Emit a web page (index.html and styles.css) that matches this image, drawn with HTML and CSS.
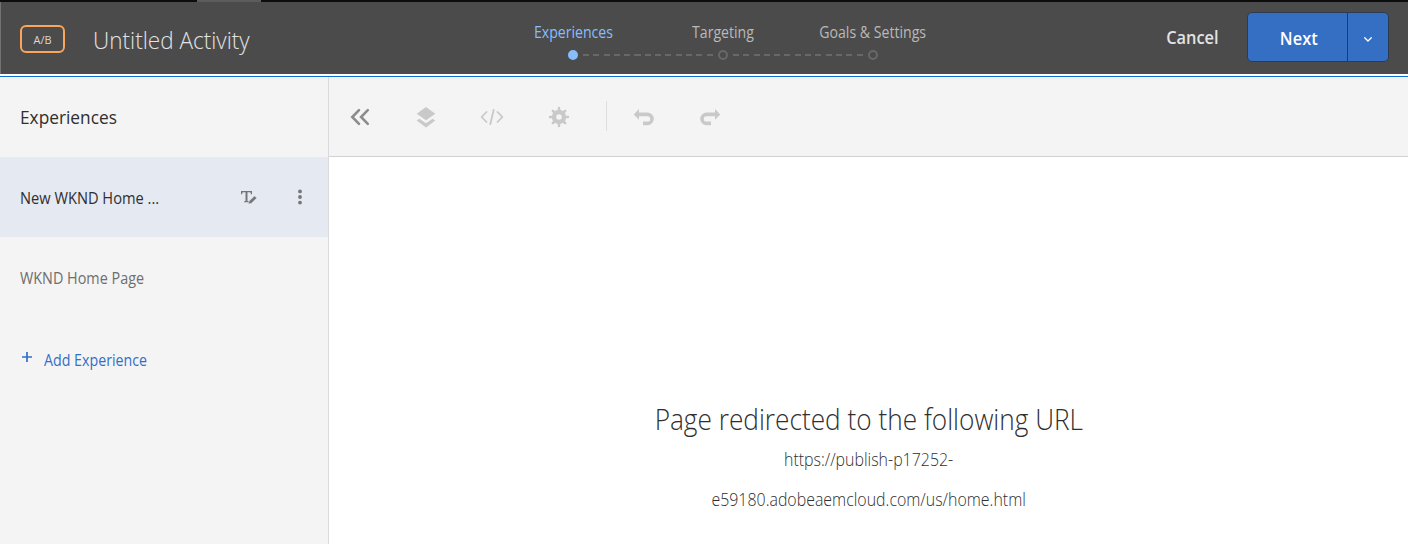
FILE: index.html
```html
<!DOCTYPE html>
<html lang="en">
<head>
<meta charset="utf-8">
<title>Untitled Activity</title>
<link rel="stylesheet" href="styles.css">
</head>
<body>
<header class="topbar">
  <div class="activity">
    <span class="badge"><span class="fit fit-badge">A/B</span></span>
    <h1 class="title"><span class="fit fit-title">Untitled Activity</span></h1>
  </div>
  <ol class="steps">
    <li class="step active"><span class="step-label fit">Experiences</span><i class="dot"></i></li>
    <li class="step"><span class="step-label fit">Targeting</span><i class="dot"></i></li>
    <li class="step"><span class="step-label fit">Goals &amp; Settings</span><i class="dot"></i></li>
  </ol>
  <div class="actions">
    <span class="cancel fit">Cancel</span>
    <div class="next-group">
      <span class="next"><span class="fit fit-next">Next</span></span>
      <span class="next-more"><svg width="8" height="5" viewBox="0 0 8 5"><path d="M.7.7 4 4 7.300.7" fill="none" stroke="#fff" stroke-width="1.3" stroke-linecap="round"/></svg></span>
    </div>
  </div>
</header>
<main class="workspace">
  <aside class="sidebar">
    <h2 class="side-title"><span class="fit fit-side">Experiences</span></h2>
    <div class="exp selected">
      <span class="exp-name fit">New WKND Home ...</span>
      <svg class="rename" width="18" height="16" viewBox="0 0 18 16"><path d="M1 2H12V5.200H11L10.300 3.200H7.500V12L9 12.500V13.200H4V12.500L5.500 12V3.200H2.700L2 5.200H1Z" fill="#747679"/><path d="M8.400 15 9.200 12 14.500 6.900 16.700 9.100 11.400 14.200Z" fill="#747679" stroke="#e5e9f2" stroke-width=".4"/></svg>
      <svg class="more" width="6" height="16" viewBox="0 0 6 16" fill="#747679"><circle cx="3" cy="2.400" r="1.900"/><circle cx="3" cy="8" r="1.900"/><circle cx="3" cy="13.600" r="1.900"/></svg>
    </div>
    <div class="exp"><span class="exp-name fit exp-second">WKND Home Page</span></div>
    <div class="add"><svg width="10" height="10" viewBox="0 0 10 10"><path d="M5 0V10M0 5H10" stroke="#326fc8" stroke-width="1.700"/></svg><span class="add-label fit">Add Experience</span></div>
  </aside>
  <section class="editor">
    <div class="toolbar">
      <span class="tool"><svg width="20" height="18" viewBox="0 0 20 18"><path d="M9 2.200 2.300 9 9 15.800M17.800 2.200 11.100 9 17.800 15.800" fill="none" stroke="#8c8c8c" stroke-width="2.600" stroke-linecap="round"/></svg></span>
      <span class="tool"><svg width="20" height="22" viewBox="0 0 20 22" fill="#c9c9c9"><path d="M10 1 19.300 7.700 10 14.300.7 7.700Z"/><path d="M3.300 12.700 10 17.300 16.700 12.700 19.300 14.600 10 21.400.7 14.600Z"/></svg></span>
      <span class="tool"><svg width="24" height="18" viewBox="0 0 24 18"><path d="M6.500 4 1.700 9 6.500 14M17.500 4 22.300 9 17.500 14M13.700 1.800 10.300 16.200" fill="none" stroke="#c9c9c9" stroke-width="1.800" stroke-linecap="round"/></svg></span>
      <span class="tool"><svg width="22" height="22" viewBox="0 0 22 22"><circle cx="11" cy="11" r="5" fill="none" stroke="#c9c9c9" stroke-width="4.400"/><path d="M11 2V5M11 17V20M2 11H5M17 11H20M4.800 4.800 7 7M15 15 17.200 17.200M4.800 17.200 7 15M15 7 17.200 4.800" stroke="#c9c9c9" stroke-width="2.500" stroke-linecap="round"/></svg></span>
      <i class="divider"></i>
      <span class="tool undo"><svg width="22" height="18" viewBox="0 0 22 18"><path d="M5.500 6.400H14.500A4.500 4.500 0 0 1 14.500 15.400H10" fill="none" stroke="#c9c9c9" stroke-width="3.600"/><path d="M.7 6.400 6 1.100V11.700Z" fill="#c9c9c9"/></svg></span>
      <span class="tool"><svg width="22" height="18" viewBox="0 0 22 18"><path d="M16.500 6.400H7.500A4.500 4.500 0 0 0 7.500 15.400H12" fill="none" stroke="#c9c9c9" stroke-width="3.600"/><path d="M21.300 6.400 16 1.100V11.700Z" fill="#c9c9c9"/></svg></span>
    </div>
    <div class="canvas">
      <h3 class="redirect"><span class="fit fit-redirect">Page redirected to the following URL</span></h3>
      <p class="url"><span class="fit fit-url">https://publish-p17252-</span><br><span class="fit fit-url">e59180.adobeaemcloud.com/us/home.html</span></p>
    </div>
  </section>
</main>
</body>
</html>
```
FILE: styles.css
```css
* { box-sizing: border-box; margin: 0; padding: 0; }
body {
  width: 1408px; height: 544px; overflow: hidden; background: #fff;
  font-family: "Open Sans", "Noto Sans", sans-serif;
  display: flex; flex-direction: column; white-space: nowrap;
}
svg { display: block; flex: none; }
h1, h2, h3 { font-weight: 400; }

/* Slightly narrowed lettering */
.fit { display: inline-block; transform: scaleX(var(--fit, .91)); transform-origin: var(--from, center); }
.fit-badge { --fit: .95; }
.fit-title { --fit: .92; --from: left; }
.fit-side { --fit: .96; --from: left; }
.fit-next { --fit: .91; }
.fit-redirect { --fit: .92; }
.fit-url { --fit: .885; }

.topbar {
  height: 74px; flex: none; background: #4b4b4b;
  border-top: 2px solid; border-image: linear-gradient(90deg, #0c0c0c 197px, #5c5c5c 197px 261px, #0c0c0c 261px) 2 0 0 0;
  display: grid; grid-template-columns: 498px 450px 1fr;
}
.activity { display: flex; align-items: flex-start; padding: 23px 0 0 19px; border-left: 1px solid #727272; }
.badge {
  width: 45px; height: 28px; border: 2px solid #f9a55a; border-radius: 6px;
  color: #d8d8d8; font-size: 11.500px; line-height: 25px; text-align: center;
}
.title { margin: -2px 0 0 28px; color: #e3e3e3; font-size: 24.500px; font-weight: 300; line-height: 34px; }
.steps { list-style: none; display: grid; grid-template-columns: repeat(3, 150px); }
.step { display: flex; flex-direction: column; align-items: center; padding-top: 19px; color: #b9b9b9; font-size: 15.500px; position: relative; }
.step-label { line-height: 22px; height: 29px; }
.active { color: #88bdfc; }
.dot { width: 10px; height: 10px; border: 2px solid #686868; border-radius: 50%; }
.active .dot { background: #88bdfc; border-color: #88bdfc; }
.step:not(:last-child)::after {
  content: ""; position: absolute; left: 85px; top: 52px; width: 130px; height: 2px;
  background: repeating-linear-gradient(90deg, #686868 0 6px, transparent 6px 10.300px);
}
.actions { display: flex; justify-content: flex-end; padding: 10px 19px 0 0; color: #e3e3e3; font-weight: 600; font-size: 18px; }
.cancel { line-height: 50px; height: 50px; margin-right: 28px; --from: right; }
.next-group { display: flex; width: 142px; height: 50px; background: #356fc4; border: 1px solid #2d3b50; border-radius: 5px; color: #fff; }
.next { width: 100px; padding-left: 2px; line-height: 50px; text-align: center; border-right: 1px solid #2d3b50; }
.next-more { flex: 1; display: grid; place-items: center; padding-top: 4px; }
.workspace { flex: 1; margin-top: 2px; border-top: 1px solid #126dd5; display: flex; min-height: 0; }
.sidebar { width: 329px; flex: none; background: #f4f4f4; border-right: 1px solid #dadada; }
.side-title { height: 80px; padding-left: 20px; line-height: 80px; color: #2f2f2f; font-size: 18px; }
.exp { height: 80px; display: flex; align-items: center; padding-left: 20px; color: #6e6e6e; font-size: 15.500px; }
.exp-name { width: 220px; padding-top: 1px; --fit: .945; --from: left; }
.exp-second { --fit: .928; }
.selected { background: #e5e9f2; color: #2f2f2f; }
.more { margin-left: 39px; }
.add { height: 84px; display: flex; align-items: center; padding-left: 22px; color: #326fc8; font-size: 15.500px; }
.add svg { margin-top: -4px; }
.add-label { margin-left: 12px; padding-top: 1px; --fit: .918; --from: left; }
.editor { flex: 1; display: flex; flex-direction: column; }
.toolbar { height: 80px; background: #f4f4f4; border-bottom: 1px solid #d2d2d2; display: flex; align-items: center; }
.tool { width: 66px; flex: none; display: flex; justify-content: center; }
.tool:first-child { margin-left: -2px; }
.tool:nth-child(4) { padding-left: 1px; }
.divider { width: 1px; height: 30px; background: #dedede; margin: -2px 0 0 15px; }
.undo { margin-left: 4px; }
.canvas { flex: 1; text-align: center; padding-top: 242px; padding-left: 1px; color: #2f2f2f; }
.redirect { font-size: 28.500px; font-weight: 300; line-height: 40px; }
.url { font-size: 18px; font-weight: 300; line-height: 40px; }
```
